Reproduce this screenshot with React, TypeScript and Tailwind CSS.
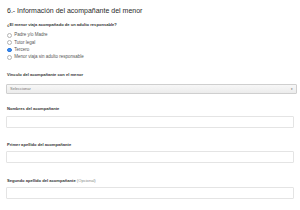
import React from "react";

const Radio = ({ label, checked }: { label: string; checked?: boolean }) => (
  <div className="flex items-center h-[7.4px]">
    <span
      className={
        checked
          ? "w-[4.6px] h-[4.6px] rounded-full border-[0.8px] border-[#2a78e0] bg-[#3b8cf0] shrink-0"
          : "w-[4.6px] h-[4.6px] rounded-full border-[0.6px] border-[#b3b3b3] bg-white shrink-0"
      }
    />
    <span className="ml-[2.6px] text-[4.5px] leading-[6px] text-[#555]">{label}</span>
  </div>
);

const Label = ({ children, className }: { children: React.ReactNode; className?: string }) => (
  <div className={"text-[4.1px] leading-[6px] font-bold text-[#333] ml-[1px] " + (className ?? "")}>{children}</div>
);

const Input = ({ className }: { className?: string }) => (
  <div className={"h-[12px] w-full border-[0.7px] border-[#e4e4e4] rounded-[1px] bg-white " + (className ?? "")} />
);

export default function App() {
  return (
    <div
      className="w-[300px] h-[210px] bg-white overflow-hidden px-[6px] pt-[6px] flex flex-col"
      style={{ fontFamily: '"Liberation Sans", Arial, sans-serif' }}
    >
      <h1 className="text-[7px] leading-[9px] text-[#2a2a2a] ml-[1px] font-normal">
        6.- Información del acompañante del menor
      </h1>
      <Label className="mt-[7px]">¿El menor viaja acompañado de un adulto responsable?</Label>
      <div className="flex flex-col mt-[3.6px] ml-[1px]">
        <Radio label="Padre y/o Madre" />
        <Radio label="Tutor legal" />
        <Radio label="Tercero" checked />
        <Radio label="Menor viaja sin adulto responsable" />
      </div>
      <Label className="mt-[11px]">Vínculo del acompañante con el menor</Label>
      <div className="mt-[6px] h-[9.5px] w-[291px] border-[0.7px] border-[#cfcfcf] rounded-[1px] bg-gradient-to-b from-[#f7f7f7] to-[#ececec] flex items-center justify-between px-[3px]">
        <span className="text-[4px] leading-[5px] text-[#777]">Seleccionar</span>
        <span className="text-[3px] leading-[4px] text-[#555]">▾</span>
      </div>
      <Label className="mt-[12.5px]">Nombres del acompañante</Label>
      <Input className="mt-[4px] w-[291px]" />
      <Label className="mt-[14px]">Primer apellido del acompañante</Label>
      <Input className="mt-[3px] w-[291px]" />
      <Label className="mt-[15px]">
        Segundo apellido del acompañante <span className="font-normal text-[#888]">(Opcional)</span>
      </Label>
      <Input className="mt-[2.5px] w-[291px]" />
    </div>
  );
}
